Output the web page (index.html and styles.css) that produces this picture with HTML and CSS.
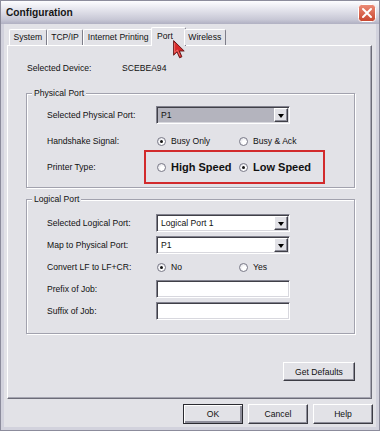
FILE: index.html
```html
<!DOCTYPE html>
<html>
<head>
<meta charset="utf-8">
<title>Configuration</title>
<link rel="stylesheet" href="styles.css">
</head>
<body>
<div class="window">
	<div class="titlebar">
		<span class="title">Configuration</span>
		<span class="close">
			<svg width="18" height="18" viewBox="0 0 18 18">
				<defs>
					<linearGradient id="cg" x1="0" y1="0" x2="0" y2="1">
						<stop offset="0" stop-color="#ec8c78"/>
						<stop offset="1" stop-color="#c8452e"/>
					</linearGradient>
				</defs>
				<rect x="0.5" y="0.5" width="17" height="17" rx="3" fill="url(#cg)" stroke="#fff"/>
				<path d="M5 5 L13 13 M13 5 L5 13" stroke="#fff" stroke-width="2" stroke-linecap="round"/>
			</svg>
		</span>
	</div>
	<div class="body">
		<div class="tabs">
			<span class="tab">System</span>
			<span class="tab">TCP/IP</span>
			<span class="tab">Internet Printing</span>
			<span class="tab active">Port</span>
			<span class="tab">Wireless</span>
		</div>
		<div class="panel">
			<div class="device">
				<span class="device_label">Selected Device:</span>
				<span>SCEBEA94</span>
			</div>

			<fieldset class="group physical">
				<legend>Physical Port</legend>
				<div class="row">
					<span class="label">Selected Physical Port:</span>
					<div class="select disabled"><span class="value">P1</span><span class="arrow"></span></div>
				</div>
				<div class="row">
					<span class="label">Handshake Signal:</span>
					<span class="opt"><span class="radio checked"></span>Busy Only</span>
					<span class="opt"><span class="radio"></span>Busy &amp; Ack</span>
				</div>
				<div class="row">
					<span class="label">Printer Type:</span>
					<div class="speed">
						<span class="opt big"><span class="radio"></span>High Speed</span>
						<span class="opt big"><span class="radio checked"></span>Low Speed</span>
					</div>
				</div>
			</fieldset>

			<fieldset class="group logical">
				<legend>Logical Port</legend>
				<div class="row">
					<span class="label">Selected Logical Port:</span>
					<div class="select"><span class="value">Logical Port 1</span><span class="arrow"></span></div>
				</div>
				<div class="row">
					<span class="label">Map to Physical Port:</span>
					<div class="select"><span class="value">P1</span><span class="arrow"></span></div>
				</div>
				<div class="row">
					<span class="label">Convert LF to LF+CR:</span>
					<span class="opt"><span class="radio checked"></span>No</span>
					<span class="opt"><span class="radio"></span>Yes</span>
				</div>
				<div class="row">
					<span class="label">Prefix of Job:</span>
					<div class="field"></div>
				</div>
				<div class="row">
					<span class="label">Suffix of Job:</span>
					<div class="field"></div>
				</div>
			</fieldset>

			<div class="defaults">
				<button class="btn wide">Get Defaults</button>
			</div>
		</div>
		<div class="footer">
			<button class="btn default">OK</button>
			<button class="btn">Cancel</button>
			<button class="btn">Help</button>
		</div>
	</div>
	<svg class="cursor" width="13" height="19" viewBox="0 0 13 19">
		<path d="M0.6 0.6 V15.2 L4 11.9 L6.6 17.8 L8.9 16.8 L6.4 11 H11.2 Z" fill="#d8282a" stroke="#5c1414" stroke-width="0.9" stroke-linejoin="round"/>
		<path d="M1.6 3 V12.6 L4.4 10 L7 15.8" fill="none" stroke="#f27a74" stroke-width="0.8"/>
	</svg>
</div>
</body>
</html>
```

FILE: styles.css
```css
* {
	box-sizing: border-box;
}
body {
	margin: 0;
	font-family: "Liberation Sans", Arial, sans-serif;
	font-size: 8.6px;
	color: #111;
}
.window {
	position: relative;
	width: 380px;
	height: 431px;
	border: 1px solid #8c8c9c;
	background: #d2d2dd;
	padding: 0 3px 3px;
	display: flex;
	flex-direction: column;
}
.titlebar {
	margin: 0 -3px;
	height: 23px;
	display: flex;
	align-items: center;
	justify-content: space-between;
	padding: 0 3px 0 5px;
	background: linear-gradient(#fdfdff, #e6e6ee 35%, #c8c8d6 80%, #b0b0c2);
}
.title {
	font-size: 10.2px;
	font-weight: bold;
	color: #161616;
}
.close {
	display: flex;
	width: 18px;
	height: 18px;
}
.body {
	flex: 1;
	background: #e2e2e7;
	padding-top: 3px;
	display: flex;
	flex-direction: column;
}
.tabs {
	position: relative;
	z-index: 1;
	display: flex;
	align-items: flex-end;
	height: 18px;
	padding-left: 5px;
}
.tab {
	height: 16px;
	line-height: 15px;
	padding: 0 3.5px;
	border: 1px solid;
	border-color: #fff #7e7e8a transparent #fff;
	border-bottom: none;
	border-radius: 2px 2px 0 0;
	background: #e2e2e7;
	white-space: nowrap;
}
.tab.active {
	height: 19px;
	line-height: 17px;
	margin: 0 -2px -1px;
	padding: 0 12px 0 5px;
}
.panel {
	margin-left: 3px;
	width: 365px;
	height: 354px;
	border: 1px solid;
	border-color: #fff #6c6c78 #6c6c78 #fff;
	box-shadow: inset -1px -1px 0 #a6a6b2;
	padding: 17px 16px 0 18px;
}
.device {
	display: flex;
	height: 10px;
	line-height: 10px;
	margin: 0 0 15px 1px;
}
.device_label {
	width: 95px;
}
.group {
	margin: 0;
	min-inline-size: 0;
	width: 329px;
	border: 1px solid #a2a2ae;
	box-shadow: inset 1px 1px 0 #fff, 1px 1px 0 #fff;
	padding: 4px 0 7px 0;
}
.group legend {
	margin-left: 5px;
	padding: 0 2px;
	line-height: 10px;
	font-size: 8.6px;
	background: #e2e2e7;
}
.logical {
	margin-top: 6px;
	padding: 8px 0 11px 0;
}
.row {
	display: flex;
	align-items: center;
	height: 26px;
	margin-left: 20px;
}
.logical .row {
	height: 22px;
}
.label {
	width: 109px;
	flex: none;
}
.select, .field {
	width: 134px;
	height: 18px;
	border: 1px solid;
	border-color: #82828e #fff #fff #82828e;
	box-shadow: inset 1px 1px 0 #404048, inset -1px -1px 0 #d8d8de;
	background: #fff;
	display: flex;
	align-items: center;
}
.select.disabled {
	background: #b4b4be;
}
.value {
	padding-left: 4px;
	flex: 1;
}
.arrow {
	width: 14px;
	height: 14px;
	margin-right: 1px;
	border: 1px solid;
	border-color: #fff #404048 #404048 #fff;
	box-shadow: inset -1px -1px 0 #8c8c98;
	background: #e2e2e7;
	display: flex;
	align-items: center;
	justify-content: center;
}
.arrow::after {
	content: "";
	border-left: 3.5px solid transparent;
	border-right: 3.5px solid transparent;
	border-top: 4px solid #000;
	margin-top: 1px;
}
.opt {
	width: 82px;
	display: flex;
	align-items: center;
	padding-left: 1px;
	white-space: nowrap;
}
.opt.big {
	font-size: 11px;
	font-weight: bold;
}
.radio {
	position: relative;
	flex: none;
	width: 9px;
	height: 9px;
	margin-right: 5px;
	border-radius: 50%;
	border: 1px solid #7a7a88;
	background: radial-gradient(circle at 65% 65%, #fff 30%, #d6d6de);
}
.radio.checked::after {
	content: "";
	position: absolute;
	left: 2px;
	top: 2px;
	width: 3px;
	height: 3px;
	border-radius: 50%;
	background: #151515;
}
.speed {
	position: relative;
	align-self: stretch;
	display: flex;
	align-items: center;
}
.speed::before {
	content: "";
	position: absolute;
	left: -12px;
	top: -4px;
	width: 177px;
	height: 30px;
	border: 2px solid #d22a2c;
}
.defaults {
	width: 329px;
	display: flex;
	justify-content: flex-end;
	margin-top: 28px;
}
.btn {
	width: 60px;
	height: 20px;
	padding: 0;
	font-family: "Liberation Sans", Arial, sans-serif;
	font-size: 8.6px;
	color: #111;
	background: #e2e2e7;
	border: 1px solid;
	border-color: #fff #3c3c44 #3c3c44 #fff;
	box-shadow: inset -1px -1px 0 #8e8e9a;
}
.btn.wide {
	width: 72px;
	height: 19px;
}
.btn.default {
	border-color: #2a2a30;
	box-shadow: inset 1px 1px 0 #fff, inset -2px -2px 0 #8e8e9a;
}
.footer {
	display: flex;
	justify-content: flex-end;
	gap: 5px;
	padding: 5px 3px 0 0;
}
.cursor {
	position: absolute;
	left: 172px;
	top: 39px;
	z-index: 2;
}
```
